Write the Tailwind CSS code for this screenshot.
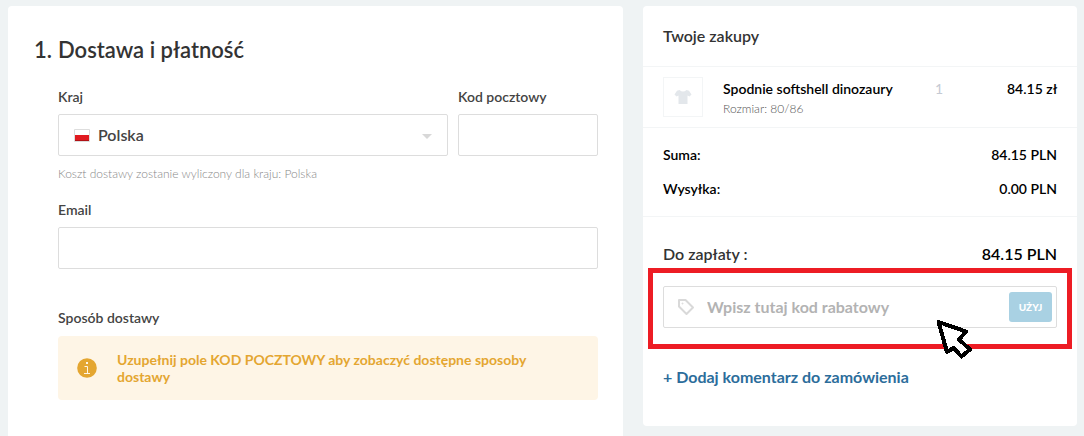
<!DOCTYPE html>
<html lang="pl">
<head>
<meta charset="utf-8">
<meta name="viewport" content="width=device-width, initial-scale=1">
<title>Dostawa i płatność</title>
<script src="https://cdn.jsdelivr.net/npm/@tailwindcss/browser@4"></script>
</head>
<body class="bg-[#eff3f4] font-['Lato',sans-serif] text-sm text-[#444]">
<div class="flex min-h-screen items-start gap-5 pt-1.5 pr-[7px] pl-2">

  <main class="min-w-0 flex-1 self-stretch rounded-t bg-white pt-7 pr-[25px] pb-7 pl-[26px]">
    <h1 class="flex text-[22px] leading-8 font-semibold text-[#333]"><span class="w-6">1.</span><span>Dostawa i płatność</span></h1>
    <form class="pt-[21px] pl-6">
      <div class="flex gap-2.5">
        <div class="min-w-0 flex-1">
          <label for="country" class="block font-semibold leading-5">Kraj</label>
          <div class="relative mt-[7px]">
            <select id="country" class="block h-[42px] w-full appearance-none rounded-xs border border-[#ddd] bg-white pr-10 pl-[39px] text-base font-semibold text-[#444]">
              <option>Polska</option>
            </select>
            <svg class="pointer-events-none absolute top-[14px] left-4" width="16" height="14" viewBox="0 0 16 14" aria-hidden="true"><rect x="0" y="1" width="16" height="13" rx="1" fill="#ddd"/><rect x="1" y="2" width="14" height="5" fill="#fff"/><rect x="1" y="7" width="14" height="6" fill="#e01a20"/><rect x="1" y="12" width="14" height="1" fill="#b01216"/></svg>
            <svg class="pointer-events-none absolute top-[20px] right-4" width="10" height="6" viewBox="0 0 10 6" aria-hidden="true"><path d="M0 0h10L5 5z" fill="#d8d8d8"/></svg>
          </div>
        </div>
        <div class="w-[140px]">
          <label for="zip" class="block font-semibold leading-5">Kod pocztowy</label>
          <input id="zip" type="text" class="mt-[7px] block h-[42px] w-full rounded-xs border border-[#ddd] px-4">
        </div>
      </div>
      <p class="mt-2.5 text-xs leading-4 font-light text-[#888]">Koszt dostawy zostanie wyliczony dla kraju: Polska</p>
      <label for="email" class="mt-[18px] block font-semibold leading-5">Email</label>
      <input id="email" type="email" class="mt-[7px] block h-[42px] w-full rounded-xs border border-[#ddd] px-4">
      <h2 class="mt-[39px] font-semibold leading-5">Sposób dostawy</h2>
      <div class="mt-2 flex items-center gap-5 rounded bg-[#fef5e6] py-[15px] pr-10 pl-[19px] font-bold text-[#e4a631]">
        <svg class="shrink-0" width="20" height="20" viewBox="0 0 20 20" aria-hidden="true"><circle cx="10" cy="10" r="9.8" fill="#e4a631"/><rect x="9" y="4" width="2" height="2" fill="#fef5e6"/><path d="M7.5 8.500h3v6.500M7 15.500h6" fill="none" stroke="#fef5e6"/></svg>
        <p class="leading-[17px]">Uzupełnij pole KOD POCZTOWY aby zobaczyć dostępne sposoby dostawy</p>
      </div>
    </form>
  </main>

  <aside class="w-2/5 max-w-[434px] min-w-[320px] shrink-0 grow-0 basis-[434px] rounded bg-white pb-[37px] text-black">
    <h2 class="border-b border-[#f3f5f6] px-5 pt-[18px] pb-[18px] text-base font-semibold text-[#333]">Twoje zakupy</h2>
    <div class="flex border-b border-[#f3f5f6] px-5 py-2.5 font-semibold">
      <div class="flex size-10 items-center justify-center border border-[#f3f5f6]">
        <svg width="18" height="16" viewBox="0 0 18 16" aria-hidden="true"><path d="M5.500 1Q9 4 12.500 1L15 1.800L17.500 5.500L15.500 7.600L13.500 6.500V15H4.500V6.500L2.500 7.600L.5 5.500L3 1.800Z" fill="#e3e7eb"/></svg>
      </div>
      <div class="ml-5 flex-1 pt-0.5">
        <p class="leading-5">Spodnie softshell dinozaury</p>
        <p class="mt-0.5 text-xs leading-4 font-light text-[#555]">Rozmiar: 80/86</p>
      </div>
      <span class="w-[72px] pt-0.5 leading-5 font-normal text-[#c5cad3]">1</span>
      <span class="w-[50px] pt-0.5 text-right leading-5 whitespace-nowrap">84.15 zł</span>
    </div>
    <dl class="flex flex-col gap-3.5 border-b border-[#f3f5f6] px-5 py-[17px] font-semibold leading-5">
      <div class="flex justify-between"><dt>Suma:</dt><dd>84.15 PLN</dd></div>
      <div class="flex justify-between"><dt>Wysyłka:</dt><dd>0.00 PLN</dd></div>
    </dl>
    <p class="flex justify-between px-5 pt-[25px] text-base font-semibold"><span class="text-[#333]">Do zapłaty :</span><span>84.15 PLN</span></p>
    <form class="relative mx-[5px] mt-0.5 border-5 border-[#ed1c24] px-2.5 pt-[13px] pb-4">
      <div class="flex h-[42px] items-center rounded-xs border border-[#ddd] pr-1 pl-[13px]">
        <svg class="shrink-0" width="18" height="18" viewBox="0 0 18 18" fill="none" stroke="#d9d9d9" stroke-width="2" stroke-linejoin="round" aria-hidden="true"><path d="M2 2h6.500l7.500 7.500L9.500 16L2 8.500z"/><circle cx="5.500" cy="5.500" r=".5" stroke-width="1"/></svg>
        <input type="text" aria-label="Kod rabatowy" placeholder="Wpisz tutaj kod rabatowy" class="ml-3 min-w-0 flex-1 text-base font-bold outline-none placeholder:text-[#b3b3b3]">
        <button type="button" class="h-[30px] w-[43px] rounded-[3px] bg-[#a9d1e3] text-[10px] font-black text-white">UŻYJ</button>
      </div>
      <svg class="pointer-events-none absolute top-[46px] right-[94px]" width="38" height="42" viewBox="0 0 38 42" shape-rendering="crispEdges" aria-hidden="true"><path d="M3.500 3L31 12.500L24 20.500L35 30.500L26.500 37.500L18.500 29L12 33z" fill="#fff" stroke="#000" stroke-width="4" stroke-linejoin="round"/></svg>
    </form>
    <a href="#" class="mx-5 mt-4 block text-base font-bold text-[#2c6d9b]">+ Dodaj komentarz do zamówienia</a>
  </aside>
</div>
</body>
</html>
